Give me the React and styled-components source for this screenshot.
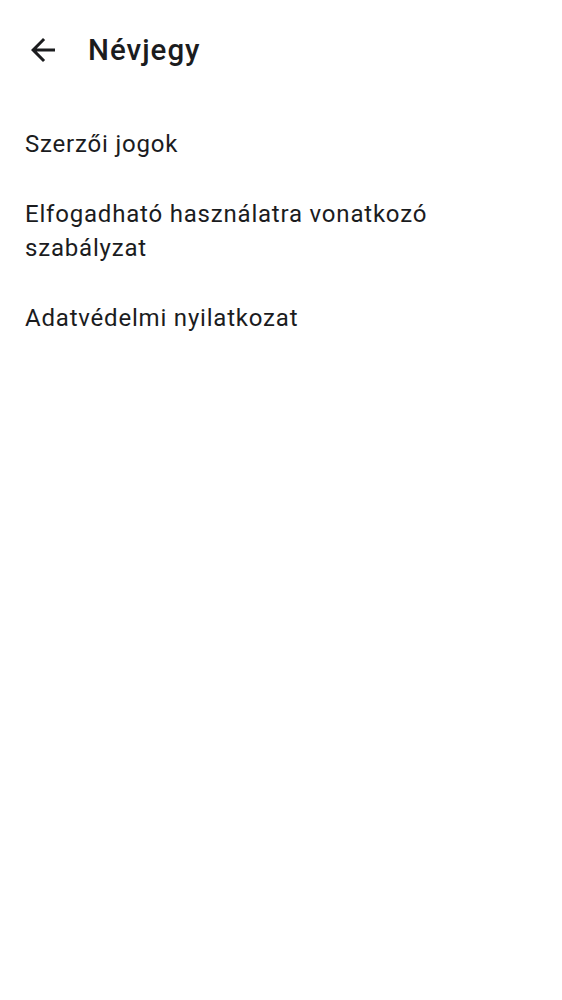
import React from "react";
import styled, { createGlobalStyle } from "styled-components";

const Global = createGlobalStyle`
  html, body { margin: 0; padding: 0; background: #fff; }
  body { font-family: Roboto, "Noto Sans", sans-serif; color: #1b1c1e; }
`;

const Page = styled.div`
  width: 562px;
  min-height: 1000px;
  background: #fff;
`;

const TopBar = styled.header`
  display: flex;
  align-items: center;
  height: 100px;
  padding-left: 25px;
  box-sizing: border-box;
`;

const BackButton = styled.button`
  display: flex;
  align-items: center;
  justify-content: center;
  width: 36px;
  height: 36px;
  padding: 0;
  border: none;
  background: none;
  color: #1b1c1e;
  margin-right: 27px;
`;

const Title = styled.h1`
  margin: 0;
  font-size: 29.5px;
  font-weight: 500;
  letter-spacing: 1px;
  color: #1b1c1e;
`;

const List = styled.ul`
  list-style: none;
  margin: 0;
  padding: 0;
  padding-top: 9px;
`;

const Item = styled.li`
  padding: 18px 25px;
  padding-right: 110px;
  font-size: 24px;
  line-height: 34px;
  letter-spacing: 0.8px;
  color: #1b1c1e;
`;

const ArrowBack = () => (
  <svg width="36" height="36" viewBox="0 0 24 24" fill="currentColor">
    <path d="M20 11H7.83l5.59-5.59L12 4l-8 8 8 8 1.41-1.41L7.83 13H20v-2z" />
  </svg>
);

export default function App() {
  return (
    <Page>
      <Global />
      <TopBar>
        <BackButton aria-label="Vissza">
          <ArrowBack />
        </BackButton>
        <Title>Névjegy</Title>
      </TopBar>
      <List>
        <Item>Szerzői jogok</Item>
        <Item>Elfogadható használatra vonatkozó szabályzat</Item>
        <Item>Adatvédelmi nyilatkozat</Item>
      </List>
    </Page>
  );
}
